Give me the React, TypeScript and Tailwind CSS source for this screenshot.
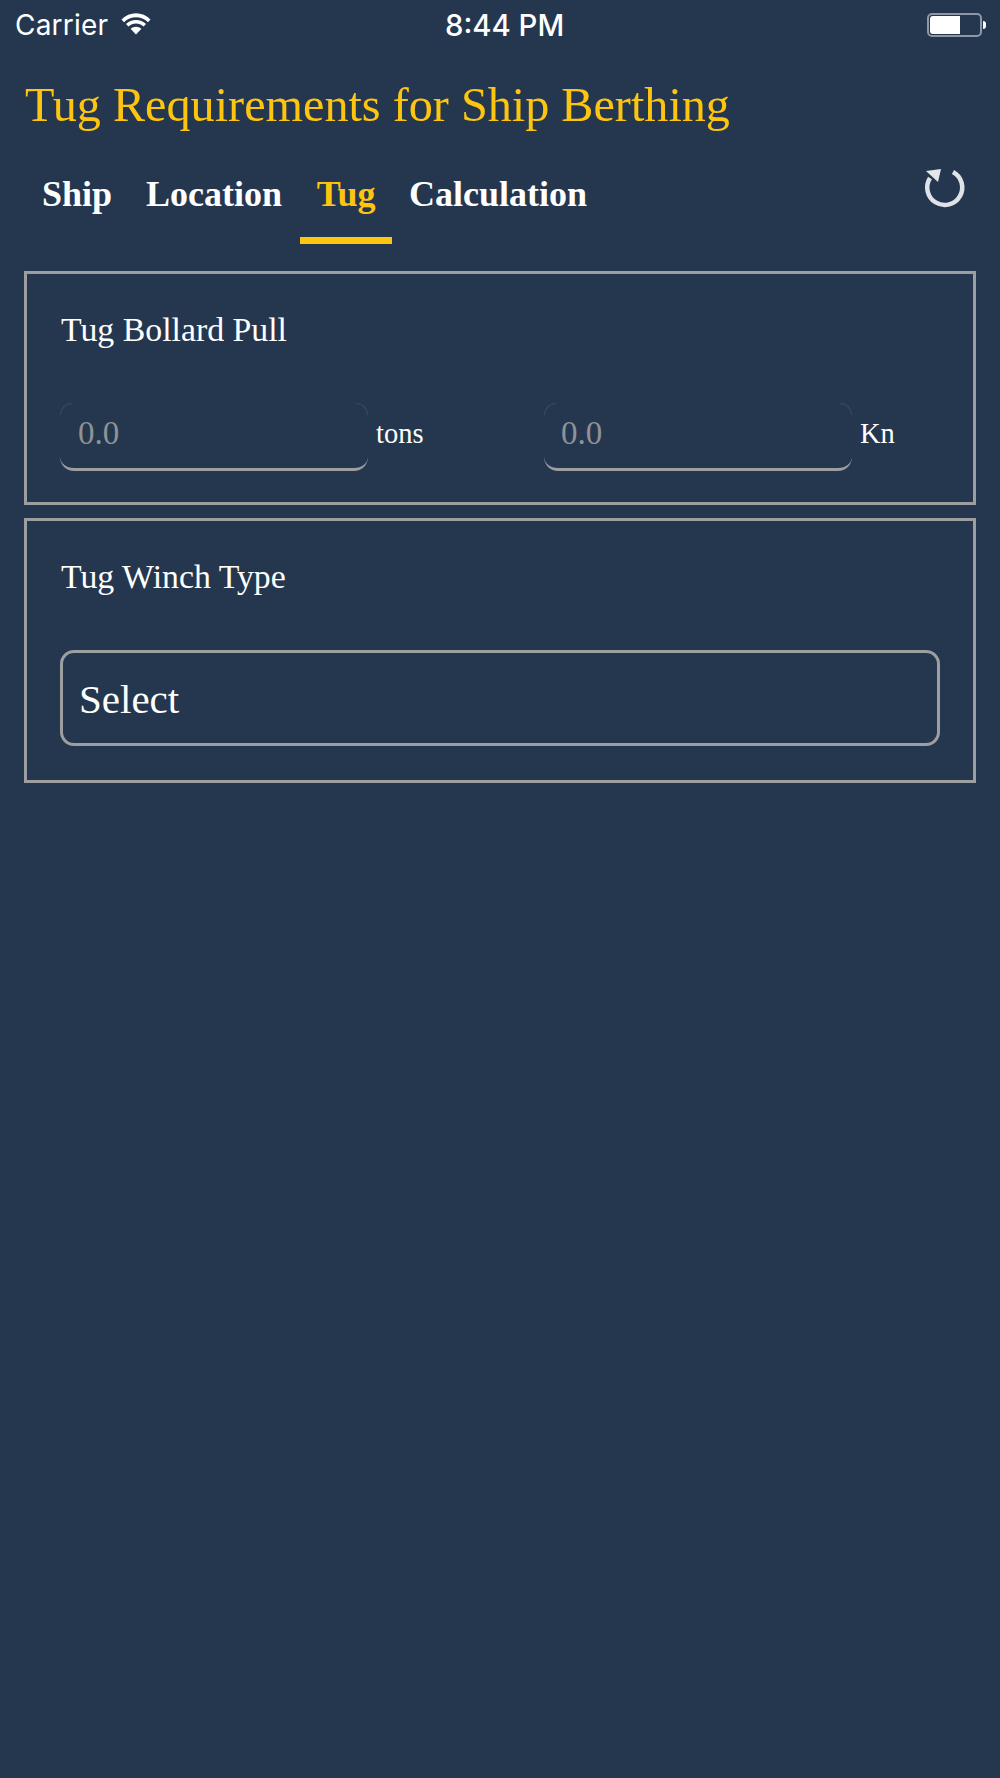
function Corners() {
  return (
    <>
      <div className="absolute left-0 top-0 w-[12px] h-[12px] rounded-tl-[14px] border-t border-l border-[#3b4c63]" />
      <div className="absolute right-0 top-0 w-[12px] h-[12px] rounded-tr-[14px] border-t border-r border-[#3b4c63]" />
    </>
  );
}

export default function App() {
  const serif = "font-['Liberation_Serif',serif]";
  return (
    <div className={`w-[1000px] h-[1778px] bg-[#25374f] overflow-hidden ${serif}`}>
      <div className="h-[50px] flex items-center relative font-['Inter',sans-serif] text-white">
        <span className="ml-[15px] text-[28px] leading-none font-normal tracking-[0.2px]">Carrier</span>
        <svg className="ml-[13px] mb-[3px]" width="30" height="23" viewBox="0 0 30 23" fill="#fff">
          <path d="M0.5 7.5 C8.5 -0.8 21.5 -0.8 29.5 7.5 L27 10.2 C20.5 3.6 9.5 3.6 3 10.2 Z" />
          <path d="M5 12 C10.5 6.6 19.5 6.6 25 12 L22.6 14.6 C18.3 10.6 11.7 10.6 7.4 14.6 Z" />
          <path d="M9.6 16.8 C12.6 14 17.4 14 20.4 16.8 L15 22.6 Z" />
        </svg>
        <span className="absolute left-[445px] top-[10px] text-[29.3px] leading-[32px] font-medium">8:44 PM</span>
        <div className="absolute left-[927px] top-[13px] w-[55px] h-[24px] rounded-[5px] border-2 border-[#8d97a5] p-[1px]">
          <div className="w-[30px] h-full bg-white rounded-l-[3px]" />
        </div>
        <div className="absolute left-[983px] top-[21px] w-[3px] h-[8px] bg-white rounded-r-[3px]" />
      </div>

      <h1 className="ml-[25px] mt-[28px] text-[48.2px] leading-[54px] font-normal text-[#fdc50f]">
        Tug Requirements for Ship Berthing
      </h1>

      <div className="relative mt-[34px] h-[78px] flex items-start text-[36px] leading-[56px] font-bold text-white">
        <span className="ml-[42px]">Ship</span>
        <span className="ml-[34px]">Location</span>
        <div className="ml-[18px] w-[92px] flex flex-col items-center text-[#fdc50f]">
          <span>Tug</span>
          <div className="mt-[15px] w-[92px] h-[7px] bg-[#fdc50f]" />
        </div>
        <span className="ml-[17px]">Calculation</span>
        <svg className="absolute left-[923px] top-[-1px]" width="44" height="44" viewBox="0 0 44 44" fill="none">
          <path d="M30 7 A17.5 17.5 0 1 1 7 13" stroke="#dfe3e7" strokeWidth="4.5" />
          <path d="M3 6 L18 4 L15 17 Z" fill="#e4e7ea" />
        </svg>
      </div>

      <div className="mx-[24px] mt-[27px] h-[234px] border-[3px] border-[#9c9ea1] px-[33px] pt-[37px]">
        <div className="pl-[1px] text-[33.8px] leading-[38px] text-white">Tug Bollard Pull</div>
        <div className="mt-[54px] flex items-center">
          <div className="relative w-[308px] h-[68px] rounded-[14px] border-b-[3px] border-[#9c9ea1] pl-[18px] text-[33px] leading-[60px] text-[#8f9296]">
            0.0
            <Corners />
          </div>
          <span className="ml-[8px] mb-[6px] w-[168px] text-[28.5px] text-white">tons</span>
          <div className="relative w-[308px] h-[68px] rounded-[14px] border-b-[3px] border-[#9c9ea1] pl-[17px] text-[33px] leading-[60px] text-[#8f9296]">
            0.0
            <Corners />
          </div>
          <span className="ml-[8px] mb-[6px] text-[28.5px] text-white">Kn</span>
        </div>
      </div>

      <div className="mx-[24px] mt-[13px] h-[265px] border-[3px] border-[#9c9ea1] px-[33px] pt-[37px]">
        <div className="pl-[1px] text-[33.8px] leading-[38px] text-white">Tug Winch Type</div>
        <div className="mt-[54px] h-[96px] rounded-[14px] border-[3px] border-[#9c9ea1] pl-[16px] text-[41px] leading-[92px] text-white">Select</div>
      </div>
    </div>
  );
}
